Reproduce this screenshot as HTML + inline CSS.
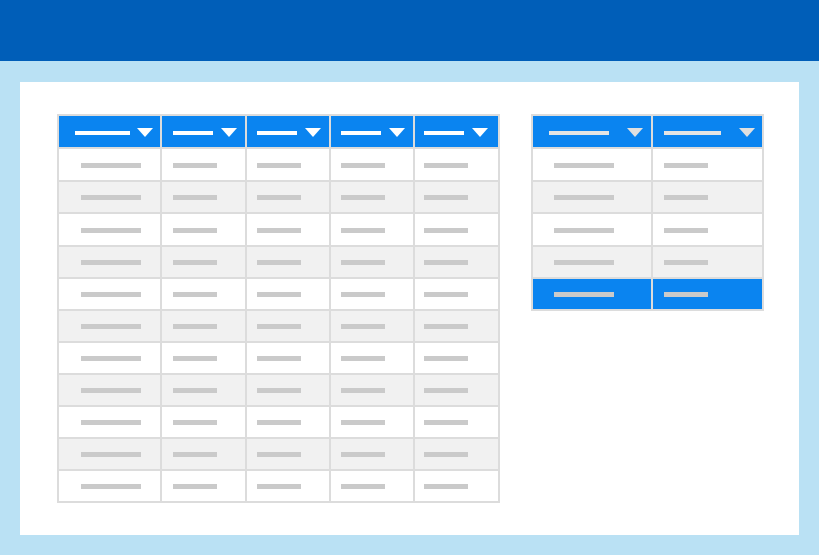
<!DOCTYPE html>
<html><head><meta charset="utf-8"><style>
*{margin:0;padding:0;box-sizing:border-box}
body{width:819px;height:555px;background:#bae1f4;position:relative;overflow:hidden;font-family:"Liberation Sans",sans-serif}
.top{position:absolute;left:0;top:0;width:819px;height:61px;background:#005eb8}
.panel{position:absolute;left:20px;top:82px;width:779px;height:453px;background:#fff}
table{position:absolute;border-collapse:collapse;table-layout:fixed}
td{border:2px solid #dcdcdc;padding:0;position:relative;background:#fff}
tr.h td{background:#0a84f0;height:33px}
tr.g td{background:#f1f1f1}
tr.s td{background:#0a84f0}
tr.r td{height:32px}
tr.f td{height:33px}
.b{position:absolute;top:50%;margin-top:-2px;height:5px;background:#cacaca}
.hb{position:absolute;top:15px;height:4px;background:#fff}
.t{position:absolute;top:12px;width:0;height:0;border-left:8px solid transparent;border-right:8px solid transparent;border-top:9px solid #fff}
.rt .t{border-top-color:#e0e0e0}
.rt .hb{background:#e4e4e4}
</style></head><body>
<div class="top"></div>
<div class="panel"></div>

<table class="lt" style="left:57px;top:114px;width:441px">
<colgroup><col style="width:103px"><col style="width:85px"><col style="width:84px"><col style="width:84px"><col style="width:85px"></colgroup>
<tr class="h"><td><div class="hb" style="left:16px;width:55px"></div><div class="t" style="left:78px"></div></td><td><div class="hb" style="left:11px;width:40px"></div><div class="t" style="left:59px"></div></td><td><div class="hb" style="left:10px;width:40px"></div><div class="t" style="left:58px"></div></td><td><div class="hb" style="left:10px;width:40px"></div><div class="t" style="left:58px"></div></td><td><div class="hb" style="left:9px;width:40px"></div><div class="t" style="left:57px"></div></td></tr>
<tr class="r f"><td><div class="b" style="left:22px;width:60px"></div></td><td><div class="b" style="left:11px;width:44px"></div></td><td><div class="b" style="left:10px;width:44px"></div></td><td><div class="b" style="left:10px;width:44px"></div></td><td><div class="b" style="left:9px;width:44px"></div></td></tr>
<tr class="r g"><td><div class="b" style="left:22px;width:60px"></div></td><td><div class="b" style="left:11px;width:44px"></div></td><td><div class="b" style="left:10px;width:44px"></div></td><td><div class="b" style="left:10px;width:44px"></div></td><td><div class="b" style="left:9px;width:44px"></div></td></tr>
<tr class="r f"><td><div class="b" style="left:22px;width:60px"></div></td><td><div class="b" style="left:11px;width:44px"></div></td><td><div class="b" style="left:10px;width:44px"></div></td><td><div class="b" style="left:10px;width:44px"></div></td><td><div class="b" style="left:9px;width:44px"></div></td></tr>
<tr class="r g"><td><div class="b" style="left:22px;width:60px"></div></td><td><div class="b" style="left:11px;width:44px"></div></td><td><div class="b" style="left:10px;width:44px"></div></td><td><div class="b" style="left:10px;width:44px"></div></td><td><div class="b" style="left:9px;width:44px"></div></td></tr>
<tr class="r"><td><div class="b" style="left:22px;width:60px"></div></td><td><div class="b" style="left:11px;width:44px"></div></td><td><div class="b" style="left:10px;width:44px"></div></td><td><div class="b" style="left:10px;width:44px"></div></td><td><div class="b" style="left:9px;width:44px"></div></td></tr>
<tr class="r g"><td><div class="b" style="left:22px;width:60px"></div></td><td><div class="b" style="left:11px;width:44px"></div></td><td><div class="b" style="left:10px;width:44px"></div></td><td><div class="b" style="left:10px;width:44px"></div></td><td><div class="b" style="left:9px;width:44px"></div></td></tr>
<tr class="r"><td><div class="b" style="left:22px;width:60px"></div></td><td><div class="b" style="left:11px;width:44px"></div></td><td><div class="b" style="left:10px;width:44px"></div></td><td><div class="b" style="left:10px;width:44px"></div></td><td><div class="b" style="left:9px;width:44px"></div></td></tr>
<tr class="r g"><td><div class="b" style="left:22px;width:60px"></div></td><td><div class="b" style="left:11px;width:44px"></div></td><td><div class="b" style="left:10px;width:44px"></div></td><td><div class="b" style="left:10px;width:44px"></div></td><td><div class="b" style="left:9px;width:44px"></div></td></tr>
<tr class="r"><td><div class="b" style="left:22px;width:60px"></div></td><td><div class="b" style="left:11px;width:44px"></div></td><td><div class="b" style="left:10px;width:44px"></div></td><td><div class="b" style="left:10px;width:44px"></div></td><td><div class="b" style="left:9px;width:44px"></div></td></tr>
<tr class="r g"><td><div class="b" style="left:22px;width:60px"></div></td><td><div class="b" style="left:11px;width:44px"></div></td><td><div class="b" style="left:10px;width:44px"></div></td><td><div class="b" style="left:10px;width:44px"></div></td><td><div class="b" style="left:9px;width:44px"></div></td></tr>
<tr class="r"><td><div class="b" style="left:22px;width:60px"></div></td><td><div class="b" style="left:11px;width:44px"></div></td><td><div class="b" style="left:10px;width:44px"></div></td><td><div class="b" style="left:10px;width:44px"></div></td><td><div class="b" style="left:9px;width:44px"></div></td></tr>
</table>

<table class="rt" style="left:531px;top:114px;width:231px">
<colgroup><col style="width:120px"><col style="width:111px"></colgroup>
<tr class="h"><td><div class="hb" style="left:16px;width:60px"></div><div class="t" style="left:94px"></div></td><td><div class="hb" style="left:11px;width:57px"></div><div class="t" style="left:86px"></div></td></tr>
<tr class="r f"><td><div class="b" style="left:21px;width:60px"></div></td><td><div class="b" style="left:11px;width:44px"></div></td></tr>
<tr class="r g"><td><div class="b" style="left:21px;width:60px"></div></td><td><div class="b" style="left:11px;width:44px"></div></td></tr>
<tr class="r f"><td><div class="b" style="left:21px;width:60px"></div></td><td><div class="b" style="left:11px;width:44px"></div></td></tr>
<tr class="r g"><td><div class="b" style="left:21px;width:60px"></div></td><td><div class="b" style="left:11px;width:44px"></div></td></tr>
<tr class="r s"><td><div class="b" style="left:21px;width:60px"></div></td><td><div class="b" style="left:11px;width:44px"></div></td></tr>
</table>
</body></html>
